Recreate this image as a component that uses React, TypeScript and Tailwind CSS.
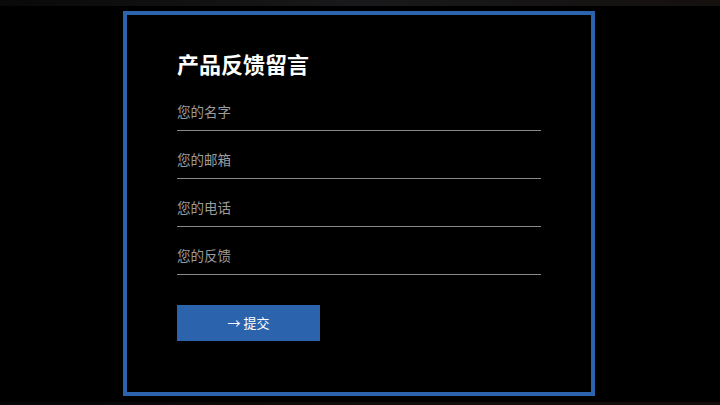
import React from "react";

const fields = ["您的名字", "您的邮箱", "您的电话", "您的反馈"];

export default function App() {
  return (
    <div
      className="relative flex h-[405px] w-[720px] flex-col overflow-hidden bg-black"
      style={{ fontFamily: '"Noto Sans CJK SC", "Noto Sans", sans-serif' }}
    >
      <div className="absolute left-0 top-0 h-[6px] w-full bg-gradient-to-r from-[#0a0a0a] via-[#1c1c1e] to-[#161210] opacity-90" />
      <div className="absolute bottom-0 left-0 h-[3px] w-full bg-gradient-to-r from-[#050505] via-[#120d0d] to-[#140c0c]" />
      <div className="ml-[123px] mt-[11px] h-[385px] w-[472px] border-4 border-[#2c63ad] bg-black pl-[50px] pt-[33px]">
        <h1 className="text-[22px] font-bold leading-[30px] text-white">产品反馈留言</h1>
        <div className="mt-[5px] w-[364px]">
          {fields.map((f) => (
            <div
              key={f}
              className="flex h-[48px] items-end border-b border-[#8a8a8a] pb-[9px] text-[13.5px] leading-[20px] text-[#9c9c9c]"
            >
              {f}
            </div>
          ))}
        </div>
        <button className="mt-[30px] flex h-[36px] w-[143px] items-center justify-center bg-[#2c63ad] text-[13px] text-white">
          → 提交
        </button>
      </div>
    </div>
  );
}
